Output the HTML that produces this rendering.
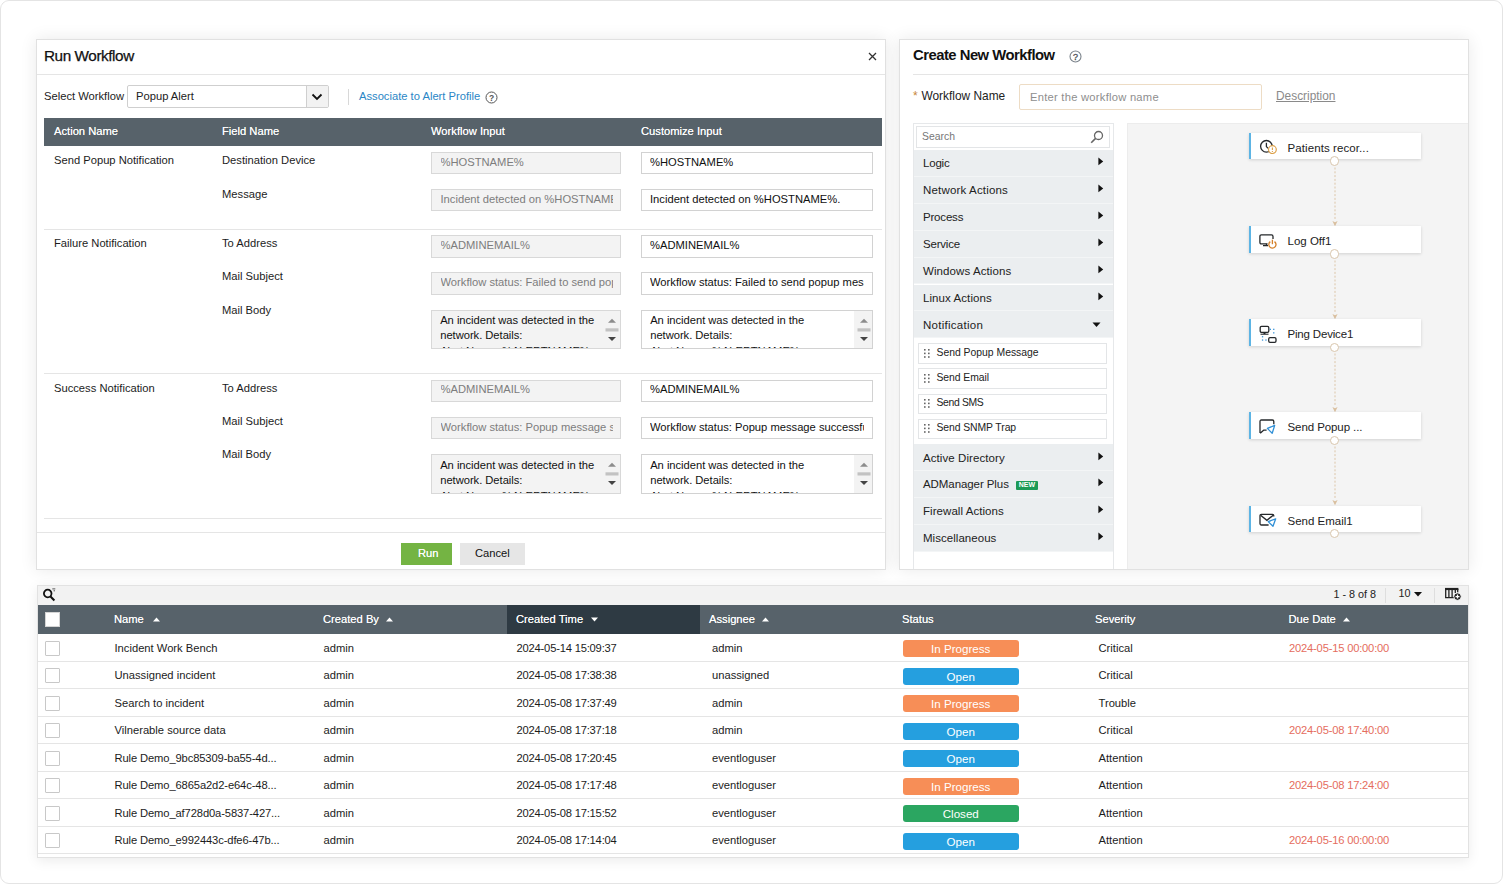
<!DOCTYPE html>
<html lang="en">
<head>
<meta charset="utf-8">
<title>Workflow</title>
<style>
*{box-sizing:border-box;margin:0;padding:0}
html,body{width:1503px;height:884px;overflow:hidden;background:#fff}
body{position:relative;font-family:"Liberation Sans",sans-serif;font-size:11.2px;color:#1c1c1c}
.t{position:absolute;white-space:nowrap;line-height:16px}
.b{position:absolute}
.frame{border:1px solid #e4e4e4;border-radius:9px;background:#fff}
.panel{background:#fff;border:1px solid #e1e1e1;box-shadow:0 0 16px rgba(0,0,0,.09)}
.hl{background:#e5e5e5}
.w{color:#fff;text-shadow:0 0 .4px rgba(255,255,255,.8)}
.in{border:1px solid #d2d2d2;background:#fff}
.in.d{background:#f3f3f3;border-color:#d8d8d8}
.clip{overflow:hidden}
.sb{background:#f3f3f3}
.mi{background:#ebeef0;border-bottom:1px solid #f3f5f6}
.si{border:1px solid #e3e5e7;background:#fff}
.node{background:#fff;border-left:2px solid #5db4e4;box-shadow:0 1px 3px rgba(0,0,0,.15)}
.port{border-radius:50%;background:#fff;border:1px solid #d9c6ad}
.bd{border-radius:3px;color:#fff;text-align:center;line-height:17px;font-size:11.6px}
.ip{background:#f78e57}.op{background:#259fdf}.cl{background:#2ba661}
.cb{border:1px solid #c8c8c8;border-radius:1px;background:#fff}
svg{position:absolute;overflow:visible}
</style>
</head>
<body>
<div class="b frame" style="left:0px;top:0px;width:1503.00px;height:884.00px;"></div>
<!-- Run Workflow -->
<div class="b panel" style="left:36px;top:39px;width:850.00px;height:531.00px;"></div>
<div class="t " style="left:44px;top:48.00px;font-size:15.3px;color:#111;letter-spacing:-0.429px;-webkit-text-stroke:.25px #111;">Run Workflow</div>
<svg style="left:868px;top:52px" width="9" height="9" viewBox="0 0 9 9"><path d="M1 1 L8 8 M8 1 L1 8" stroke="#333" stroke-width="1.3" fill="none"/></svg>
<div class="b hl" style="left:37px;top:74px;width:848.00px;height:1.00px;"></div>
<div class="t " style="left:44px;top:88.20px;font-size:11.2px;color:#222;">Select Workflow</div>
<div class="b " style="left:127px;top:85px;width:202.00px;height:23.00px;border:1px solid #cfcfcf;background:#fff;border-radius:2px"></div>
<div class="t " style="left:136px;top:88.20px;font-size:11.2px;color:#222;">Popup Alert</div>
<div class="b " style="left:306px;top:86px;width:22.00px;height:21.00px;border-left:1px solid #cfcfcf;background:#f2f2f2;border-radius:0 1px 1px 0"></div>
<svg style="left:311px;top:91.8px" width="12" height="10" viewBox="0 0 12 10"><path d="M1.5 2.5 L6 7 L10.5 2.5" fill="none" stroke="#111" stroke-width="1.8"/></svg>
<div class="b " style="left:348px;top:89px;width:1.00px;height:16.00px;background:#d8d8d8"></div>
<div class="t " style="left:359px;top:88.20px;font-size:11.2px;color:#2a86c6;">Associate to Alert Profile</div>
<svg style="left:485px;top:91px" width="13" height="13" viewBox="0 0 13 13"><circle cx="6.5" cy="6.5" r="5.5" fill="none" stroke="#555" stroke-width="1"/><text x="6.5" y="9.6" font-size="8.5" font-family="Liberation Sans, sans-serif" font-weight="bold" text-anchor="middle" fill="#555">?</text></svg>
<div class="b " style="left:44px;top:117.5px;width:838.00px;height:28.50px;background:#57626a"></div>
<div class="t w" style="left:54px;top:122.50px;font-size:11.2px;">Action Name</div>
<div class="t w" style="left:222px;top:122.50px;font-size:11.2px;">Field Name</div>
<div class="t w" style="left:431px;top:122.50px;font-size:11.2px;">Workflow Input</div>
<div class="t w" style="left:641px;top:122.50px;font-size:11.2px;">Customize Input</div>
<div class="t " style="left:54px;top:152.30px;font-size:11.2px;">Send Popup Notification</div>
<div class="t " style="left:222px;top:152.30px;font-size:11.2px;">Destination Device</div>
<div class="b in d" style="left:431px;top:152px;width:190.00px;height:22.00px;"></div>
<div class="b in" style="left:641px;top:152px;width:232.00px;height:22.00px;"></div>
<div class="b clip" style="left:440.5px;top:153px;width:172px;height:20px">
<div class="t " style="left:0px;top:1.00px;font-size:11.2px;color:#7d7d7d;">%HOSTNAME%</div>
</div>
<div class="b clip" style="left:650px;top:153px;width:214px;height:20px">
<div class="t " style="left:0px;top:1.00px;font-size:11.2px;color:#111;">%HOSTNAME%</div>
</div>
<div class="t " style="left:222px;top:185.60px;font-size:11.2px;">Message</div>
<div class="b in d" style="left:431px;top:189px;width:190.00px;height:22.00px;"></div>
<div class="b in" style="left:641px;top:189px;width:232.00px;height:22.00px;"></div>
<div class="b clip" style="left:440.5px;top:190px;width:172px;height:20px">
<div class="t " style="left:0px;top:1.00px;font-size:11.2px;color:#7d7d7d;">Incident detected on %HOSTNAME%.</div>
</div>
<div class="b clip" style="left:650px;top:190px;width:214px;height:20px">
<div class="t " style="left:0px;top:1.00px;font-size:11.2px;color:#111;">Incident detected on %HOSTNAME%.</div>
</div>
<div class="b hl" style="left:44px;top:229px;width:838.00px;height:1.00px;"></div>
<div class="t " style="left:54px;top:235.20px;font-size:11.2px;">Failure Notification</div>
<div class="t " style="left:222px;top:235.20px;font-size:11.2px;">To Address</div>
<div class="b in d" style="left:431px;top:235px;width:190.00px;height:23.00px;"></div>
<div class="b in" style="left:641px;top:235px;width:232.00px;height:23.00px;"></div>
<div class="b clip" style="left:440.5px;top:236px;width:172px;height:21px">
<div class="t " style="left:0px;top:1.20px;font-size:11.2px;color:#7d7d7d;">%ADMINEMAIL%</div>
</div>
<div class="b clip" style="left:650px;top:236px;width:214px;height:21px">
<div class="t " style="left:0px;top:1.20px;font-size:11.2px;color:#111;">%ADMINEMAIL%</div>
</div>
<div class="t " style="left:222px;top:268.40px;font-size:11.2px;">Mail Subject</div>
<div class="b in d" style="left:431px;top:272px;width:190.00px;height:23.00px;"></div>
<div class="b in" style="left:641px;top:272px;width:232.00px;height:23.00px;"></div>
<div class="b clip" style="left:440.5px;top:273px;width:172px;height:21px">
<div class="t " style="left:0px;top:0.90px;font-size:11.2px;color:#7d7d7d;">Workflow status: Failed to send popup message</div>
</div>
<div class="b clip" style="left:650px;top:273px;width:214px;height:21px">
<div class="t " style="left:0px;top:0.90px;font-size:11.2px;color:#111;">Workflow status: Failed to send popup message</div>
</div>
<div class="t " style="left:222px;top:302.10px;font-size:11.2px;">Mail Body</div>
<div class="b in d" style="left:431px;top:310px;width:190.00px;height:39.00px;"></div>
<div class="b clip" style="left:432px;top:311px;width:188px;height:37px">
<div class="t " style="left:8.2px;top:0.90px;font-size:11.2px;color:#111;letter-spacing:-.03px;">An incident was detected in the</div>
<div class="t " style="left:8.2px;top:16.20px;font-size:11.2px;color:#111;letter-spacing:-.03px;">network. Details:</div>
<div class="t " style="left:8.2px;top:31.50px;font-size:11.2px;color:#111;letter-spacing:-.03px;">Alert Name: %ALERTNAME%</div>
<div class="b sb" style="left:170px;top:0;width:18px;height:37px"></div>
<svg style="left:175px;top:6.5px" width="10" height="24" viewBox="0 0 10 24"><path d="M1 4.7 L5 0.7 L9 4.7 Z" fill="#8c8c8c"/><rect x="-1.5" y="10.3" width="13" height="3.2" fill="#c2c2c2"/><path d="M1 19 L5 23 L9 19 Z" fill="#444"/></svg>
</div>
<div class="b in" style="left:641px;top:310px;width:232.00px;height:39.00px;"></div>
<div class="b clip" style="left:642px;top:311px;width:230px;height:37px">
<div class="t " style="left:8.2px;top:0.90px;font-size:11.2px;color:#111;letter-spacing:-.03px;">An incident was detected in the</div>
<div class="t " style="left:8.2px;top:16.20px;font-size:11.2px;color:#111;letter-spacing:-.03px;">network. Details:</div>
<div class="t " style="left:8.2px;top:31.50px;font-size:11.2px;color:#111;letter-spacing:-.03px;">Alert Name: %ALERTNAME%</div>
<div class="b sb" style="left:212px;top:0;width:18px;height:37px"></div>
<svg style="left:217px;top:6.5px" width="10" height="24" viewBox="0 0 10 24"><path d="M1 4.7 L5 0.7 L9 4.7 Z" fill="#8c8c8c"/><rect x="-1.5" y="10.3" width="13" height="3.2" fill="#c2c2c2"/><path d="M1 19 L5 23 L9 19 Z" fill="#444"/></svg>
</div>
<div class="b hl" style="left:44px;top:373px;width:838.00px;height:1.00px;"></div>
<div class="t " style="left:54px;top:379.50px;font-size:11.2px;">Success Notification</div>
<div class="t " style="left:222px;top:379.50px;font-size:11.2px;">To Address</div>
<div class="b in d" style="left:431px;top:380px;width:190.00px;height:22.00px;"></div>
<div class="b in" style="left:641px;top:380px;width:232.00px;height:22.00px;"></div>
<div class="b clip" style="left:440.5px;top:381px;width:172px;height:20px">
<div class="t " style="left:0px;top:0.20px;font-size:11.2px;color:#7d7d7d;">%ADMINEMAIL%</div>
</div>
<div class="b clip" style="left:650px;top:381px;width:214px;height:20px">
<div class="t " style="left:0px;top:0.20px;font-size:11.2px;color:#111;">%ADMINEMAIL%</div>
</div>
<div class="t " style="left:222px;top:412.80px;font-size:11.2px;">Mail Subject</div>
<div class="b in d" style="left:431px;top:417px;width:190.00px;height:22.00px;"></div>
<div class="b in" style="left:641px;top:417px;width:232.00px;height:22.00px;"></div>
<div class="b clip" style="left:440.5px;top:418px;width:172px;height:20px">
<div class="t " style="left:0px;top:0.60px;font-size:11.2px;color:#7d7d7d;">Workflow status: Popup message successfully sent</div>
</div>
<div class="b clip" style="left:650px;top:418px;width:214px;height:20px">
<div class="t " style="left:0px;top:0.60px;font-size:11.2px;color:#111;">Workflow status: Popup message successfully sent</div>
</div>
<div class="t " style="left:222px;top:445.70px;font-size:11.2px;">Mail Body</div>
<div class="b in d" style="left:431px;top:454px;width:190.00px;height:40.00px;"></div>
<div class="b clip" style="left:432px;top:455px;width:188px;height:38px">
<div class="t " style="left:8.2px;top:1.90px;font-size:11.2px;color:#111;letter-spacing:-.03px;">An incident was detected in the</div>
<div class="t " style="left:8.2px;top:17.20px;font-size:11.2px;color:#111;letter-spacing:-.03px;">network. Details:</div>
<div class="t " style="left:8.2px;top:32.50px;font-size:11.2px;color:#111;letter-spacing:-.03px;">Alert Name: %ALERTNAME%</div>
<div class="b sb" style="left:170px;top:0;width:18px;height:38px"></div>
<svg style="left:175px;top:7.0px" width="10" height="24" viewBox="0 0 10 24"><path d="M1 4.7 L5 0.7 L9 4.7 Z" fill="#8c8c8c"/><rect x="-1.5" y="10.3" width="13" height="3.2" fill="#c2c2c2"/><path d="M1 19 L5 23 L9 19 Z" fill="#444"/></svg>
</div>
<div class="b in" style="left:641px;top:454px;width:232.00px;height:40.00px;"></div>
<div class="b clip" style="left:642px;top:455px;width:230px;height:38px">
<div class="t " style="left:8.2px;top:1.90px;font-size:11.2px;color:#111;letter-spacing:-.03px;">An incident was detected in the</div>
<div class="t " style="left:8.2px;top:17.20px;font-size:11.2px;color:#111;letter-spacing:-.03px;">network. Details:</div>
<div class="t " style="left:8.2px;top:32.50px;font-size:11.2px;color:#111;letter-spacing:-.03px;">Alert Name: %ALERTNAME%</div>
<div class="b sb" style="left:212px;top:0;width:18px;height:38px"></div>
<svg style="left:217px;top:7.0px" width="10" height="24" viewBox="0 0 10 24"><path d="M1 4.7 L5 0.7 L9 4.7 Z" fill="#8c8c8c"/><rect x="-1.5" y="10.3" width="13" height="3.2" fill="#c2c2c2"/><path d="M1 19 L5 23 L9 19 Z" fill="#444"/></svg>
</div>
<div class="b hl" style="left:44px;top:518px;width:838.00px;height:1.00px;"></div>
<div class="b hl" style="left:37px;top:531.5px;width:848.00px;height:1.00px;"></div>
<div class="b " style="left:401px;top:543px;width:51.00px;height:22.00px;background:#74b443"></div>
<div class="t w" style="left:418px;top:545.20px;font-size:11.2px;color:#fff;">Run</div>
<div class="b " style="left:460px;top:543px;width:65.00px;height:22.00px;background:#e6e6e6"></div>
<div class="t " style="left:475px;top:545.20px;font-size:11.2px;color:#111;">Cancel</div>
<!-- Create New Workflow -->
<div class="b panel" style="left:899px;top:39px;width:570.00px;height:531.00px;"></div>
<div class="t " style="left:913px;top:47.20px;font-size:14.8px;color:#111;font-weight:bold;letter-spacing:-0.497px;">Create New Workflow</div>
<svg style="left:1069px;top:50px" width="13" height="13" viewBox="0 0 13 13"><circle cx="6.5" cy="6.5" r="5.5" fill="none" stroke="#7b838b" stroke-width="1.1"/><text x="6.5" y="9.7" font-size="9" font-family="Liberation Sans, sans-serif" text-anchor="middle" fill="#4a4f55" stroke="#4a4f55" stroke-width=".3">?</text></svg>
<div class="b hl" style="left:913px;top:74px;width:555.00px;height:1.00px;"></div>
<div class="t " style="left:913px;top:88.20px;font-size:12px;color:#c8873a;">*</div>
<div class="t " style="left:921.5px;top:87.70px;font-size:11.9px;color:#222;">Workflow Name</div>
<div class="b " style="left:1019px;top:84px;width:242.50px;height:25.50px;border:1px solid #eddcc5;background:#fff;border-radius:2px"></div>
<div class="t " style="left:1030px;top:88.70px;font-size:11.2px;color:#8e8e8e;letter-spacing:.25px;">Enter the workflow name</div>
<div class="t " style="left:1276px;top:88.20px;font-size:11.9px;color:#8a8a8a;text-decoration:underline;">Description</div>
<div class="b " style="left:913px;top:123px;width:200.50px;height:446.00px;border:1px solid #e6e8ea;border-bottom:0;background:#fff"></div>
<div class="b " style="left:916px;top:126px;width:194.00px;height:21.50px;border:1px solid #e3e5e7;background:#fff"></div>
<div class="t " style="left:922px;top:129.20px;font-size:10.4px;color:#777;">Search</div>
<svg style="left:1090px;top:130px" width="14" height="14" viewBox="0 0 14 14"><circle cx="8.5" cy="5.5" r="4" fill="none" stroke="#666" stroke-width="1.3"/><path d="M5.6 8.4 L1.2 12.8" stroke="#666" stroke-width="1.6" fill="none"/></svg>
<div class="b mi" style="left:914px;top:150.0px;width:198.50px;height:26.90px;"></div>
<div class="t " style="left:923px;top:155.20px;font-size:11.5px;color:#222;letter-spacing:-0.198px;">Logic</div>
<svg style="left:1098px;top:157.2px" width="6" height="9" viewBox="0 0 6 9"><path d="M0.4 0.6 L5.2 4.4 L0.4 8.2 Z" fill="#111"/></svg>
<div class="b mi" style="left:914px;top:176.9px;width:198.50px;height:26.90px;"></div>
<div class="t " style="left:923px;top:182.10px;font-size:11.5px;color:#222;letter-spacing:0.170px;">Network Actions</div>
<svg style="left:1098px;top:184.1px" width="6" height="9" viewBox="0 0 6 9"><path d="M0.4 0.6 L5.2 4.4 L0.4 8.2 Z" fill="#111"/></svg>
<div class="b mi" style="left:914px;top:203.8px;width:198.50px;height:26.90px;"></div>
<div class="t " style="left:923px;top:209.00px;font-size:11.5px;color:#222;letter-spacing:-0.192px;">Process</div>
<svg style="left:1098px;top:211.0px" width="6" height="9" viewBox="0 0 6 9"><path d="M0.4 0.6 L5.2 4.4 L0.4 8.2 Z" fill="#111"/></svg>
<div class="b mi" style="left:914px;top:230.70000000000002px;width:198.50px;height:26.90px;"></div>
<div class="t " style="left:923px;top:235.90px;font-size:11.5px;color:#222;letter-spacing:-0.207px;">Service</div>
<svg style="left:1098px;top:237.9px" width="6" height="9" viewBox="0 0 6 9"><path d="M0.4 0.6 L5.2 4.4 L0.4 8.2 Z" fill="#111"/></svg>
<div class="b mi" style="left:914px;top:257.6px;width:198.50px;height:26.90px;"></div>
<div class="t " style="left:923px;top:262.80px;font-size:11.5px;color:#222;letter-spacing:0.092px;">Windows Actions</div>
<svg style="left:1098px;top:264.8px" width="6" height="9" viewBox="0 0 6 9"><path d="M0.4 0.6 L5.2 4.4 L0.4 8.2 Z" fill="#111"/></svg>
<div class="b mi" style="left:914px;top:284.5px;width:198.50px;height:26.90px;"></div>
<div class="t " style="left:923px;top:289.70px;font-size:11.5px;color:#222;letter-spacing:0.080px;">Linux Actions</div>
<svg style="left:1098px;top:291.7px" width="6" height="9" viewBox="0 0 6 9"><path d="M0.4 0.6 L5.2 4.4 L0.4 8.2 Z" fill="#111"/></svg>
<div class="b mi" style="left:914px;top:311.4px;width:198.50px;height:26.90px;"></div>
<div class="t " style="left:923px;top:316.60px;font-size:11.5px;color:#222;letter-spacing:0.268px;">Notification</div>
<svg style="left:1092px;top:322.4px" width="9" height="6" viewBox="0 0 9 6"><path d="M0.5 0.5 L8.5 0.5 L4.5 5 Z" fill="#111"/></svg>
<div class="b si" style="left:918px;top:343.3px;width:189.00px;height:20.60px;"></div>
<svg style="left:924px;top:348.8px" width="7" height="10" viewBox="0 0 7 10"><g fill="#666"><rect x="0" y="0" width="1.6" height="1.6"/><rect x="4" y="0" width="1.6" height="1.6"/><rect x="0" y="3.6" width="1.6" height="1.6"/><rect x="4" y="3.6" width="1.6" height="1.6"/><rect x="0" y="7.2" width="1.6" height="1.6"/><rect x="4" y="7.2" width="1.6" height="1.6"/></g></svg>
<div class="t " style="left:936.5px;top:344.80px;font-size:10.4px;color:#222;letter-spacing:-0.008px;">Send Popup Message</div>
<div class="b si" style="left:918px;top:368.45px;width:189.00px;height:20.60px;"></div>
<svg style="left:924px;top:373.9px" width="7" height="10" viewBox="0 0 7 10"><g fill="#666"><rect x="0" y="0" width="1.6" height="1.6"/><rect x="4" y="0" width="1.6" height="1.6"/><rect x="0" y="3.6" width="1.6" height="1.6"/><rect x="4" y="3.6" width="1.6" height="1.6"/><rect x="0" y="7.2" width="1.6" height="1.6"/><rect x="4" y="7.2" width="1.6" height="1.6"/></g></svg>
<div class="t " style="left:936.5px;top:369.95px;font-size:10.4px;color:#222;letter-spacing:-0.068px;">Send Email</div>
<div class="b si" style="left:918px;top:393.59999999999997px;width:189.00px;height:20.60px;"></div>
<svg style="left:924px;top:399.1px" width="7" height="10" viewBox="0 0 7 10"><g fill="#666"><rect x="0" y="0" width="1.6" height="1.6"/><rect x="4" y="0" width="1.6" height="1.6"/><rect x="0" y="3.6" width="1.6" height="1.6"/><rect x="4" y="3.6" width="1.6" height="1.6"/><rect x="0" y="7.2" width="1.6" height="1.6"/><rect x="4" y="7.2" width="1.6" height="1.6"/></g></svg>
<div class="t " style="left:936.5px;top:395.10px;font-size:10.4px;color:#222;letter-spacing:-0.339px;">Send SMS</div>
<div class="b si" style="left:918px;top:418.74999999999994px;width:189.00px;height:20.60px;"></div>
<svg style="left:924px;top:424.2px" width="7" height="10" viewBox="0 0 7 10"><g fill="#666"><rect x="0" y="0" width="1.6" height="1.6"/><rect x="4" y="0" width="1.6" height="1.6"/><rect x="0" y="3.6" width="1.6" height="1.6"/><rect x="4" y="3.6" width="1.6" height="1.6"/><rect x="0" y="7.2" width="1.6" height="1.6"/><rect x="4" y="7.2" width="1.6" height="1.6"/></g></svg>
<div class="t " style="left:936.5px;top:420.25px;font-size:10.4px;color:#222;letter-spacing:-0.081px;">Send SNMP Trap</div>
<div class="b mi" style="left:914px;top:444.3px;width:198.50px;height:26.90px;"></div>
<div class="t " style="left:923px;top:449.50px;font-size:11.5px;color:#222;letter-spacing:0.074px;">Active Directory</div>
<svg style="left:1098px;top:451.5px" width="6" height="9" viewBox="0 0 6 9"><path d="M0.4 0.6 L5.2 4.4 L0.4 8.2 Z" fill="#111"/></svg>
<div class="b mi" style="left:914px;top:471.2px;width:198.50px;height:26.90px;"></div>
<div class="t " style="left:923px;top:476.40px;font-size:11.5px;color:#222;letter-spacing:-0.081px;">ADManager Plus</div>
<svg style="left:1098px;top:478.4px" width="6" height="9" viewBox="0 0 6 9"><path d="M0.4 0.6 L5.2 4.4 L0.4 8.2 Z" fill="#111"/></svg>
<div class="b" style="left:1016px;top:481.2px;width:22px;height:9px;background:#1d9a57;color:#fff;font-size:7px;font-weight:bold;line-height:8.5px;text-align:center;letter-spacing:.1px;border-radius:1px">NEW</div>
<div class="b mi" style="left:914px;top:498.09999999999997px;width:198.50px;height:26.90px;"></div>
<div class="t " style="left:923px;top:503.30px;font-size:11.5px;color:#222;letter-spacing:0.057px;">Firewall Actions</div>
<svg style="left:1098px;top:505.3px" width="6" height="9" viewBox="0 0 6 9"><path d="M0.4 0.6 L5.2 4.4 L0.4 8.2 Z" fill="#111"/></svg>
<div class="b mi" style="left:914px;top:525.0px;width:198.50px;height:26.90px;"></div>
<div class="t " style="left:923px;top:530.20px;font-size:11.5px;color:#222;letter-spacing:0.041px;">Miscellaneous</div>
<svg style="left:1098px;top:532.2px" width="6" height="9" viewBox="0 0 6 9"><path d="M0.4 0.6 L5.2 4.4 L0.4 8.2 Z" fill="#111"/></svg>
<div class="b " style="left:1127px;top:123px;width:341.00px;height:446.00px;background:#f4f4f4;border-top:1px solid #ececec;border-left:1px solid #ececec"></div>
<div class="b node" style="left:1248.5px;top:132.8px;width:172.00px;height:26.70px;"></div>
<svg style="left:1259px;top:139.0px" width="18" height="19" viewBox="0 0 18 19"><circle cx="7.4" cy="7.3" r="5.8" fill="none" stroke="#25282b" stroke-width="1.3"/><path d="M7.4 3.8 V7.6 L9 9.2" fill="none" stroke="#25282b" stroke-width="1.3"/><circle cx="13.4" cy="10.6" r="3.9" fill="#fff" stroke="#dca048" stroke-width="1.2"/><path d="M13.4 8.4 V11 M13.4 12 V12.9" stroke="#dca048" stroke-width="1.1"/></svg>
<div class="t " style="left:1287.5px;top:139.80px;font-size:11.5px;color:#222;letter-spacing:0.09px;">Patients recor...</div>
<svg style="left:1330px;top:166.8px" width="10" height="60" viewBox="0 0 10 60"><path d="M5 0.5 V52" stroke="#dcc5a8" stroke-width="1" stroke-dasharray="2 1.8" fill="none"/><path d="M2.4 54 L5 55.2 L7.6 54 L5 59.2 Z" fill="#d9bf9f"/></svg>
<div class="b port" style="left:1329.7px;top:156.20000000000002px;width:9.40px;height:9.40px;"></div>
<div class="b node" style="left:1248.5px;top:226.0px;width:172.00px;height:26.70px;"></div>
<svg style="left:1259px;top:234.0px" width="18" height="19" viewBox="0 0 18 19"><path d="M8.5 9.8 H2.4 Q0.9 9.8 0.9 8.3 V2.4 Q0.9 0.9 2.4 0.9 H12.5 Q14 0.9 14 2.4 V5" fill="none" stroke="#25282b" stroke-width="1.3"/><path d="M7.5 9.8 V11.5 M4 11.6 H9" stroke="#25282b" stroke-width="1.3" fill="none"/><path d="M11.3 7.6 A3.6 3.6 0 1 0 15.5 7.6" fill="none" stroke="#d5812a" stroke-width="1.3"/><path d="M13.4 5.7 V10.2" stroke="#d5812a" stroke-width="1.3"/></svg>
<div class="t " style="left:1287.5px;top:233.00px;font-size:11.5px;color:#222;letter-spacing:0px;">Log Off1</div>
<svg style="left:1330px;top:260.0px" width="10" height="60" viewBox="0 0 10 60"><path d="M5 0.5 V52" stroke="#dcc5a8" stroke-width="1" stroke-dasharray="2 1.8" fill="none"/><path d="M2.4 54 L5 55.2 L7.6 54 L5 59.2 Z" fill="#d9bf9f"/></svg>
<div class="b port" style="left:1329.7px;top:249.4px;width:9.40px;height:9.40px;"></div>
<div class="b node" style="left:1248.5px;top:319.2px;width:172.00px;height:26.70px;"></div>
<svg style="left:1259px;top:325.0px" width="18" height="19" viewBox="0 0 18 19"><rect x="1.2" y="1.4" width="8.6" height="6" rx="1.3" fill="none" stroke="#25282b" stroke-width="1.3"/><path d="M1.5 9.2 H9.5" stroke="#25282b" stroke-width="1.1"/><path d="M4.5 7.5 H6.5 V9 H4.5 Z" fill="#25282b"/><rect x="9.7" y="12.7" width="7.3" height="4.6" rx="1.3" fill="none" stroke="#25282b" stroke-width="1.3"/><g fill="#3a94d8"><rect x="10.7" y="3.7" width="1.3" height="1.3"/><rect x="14.1" y="3.7" width="1.3" height="1.3"/><rect x="14.1" y="7.2" width="1.3" height="1.3"/><rect x="2.9" y="11.1" width="1.3" height="1.3"/><rect x="2.9" y="14.4" width="1.3" height="1.3"/><rect x="6.3" y="14.4" width="1.3" height="1.3"/></g></svg>
<div class="t " style="left:1287.5px;top:326.20px;font-size:11.5px;color:#222;letter-spacing:-0.18px;">Ping Device1</div>
<svg style="left:1330px;top:353.2px" width="10" height="60" viewBox="0 0 10 60"><path d="M5 0.5 V52" stroke="#dcc5a8" stroke-width="1" stroke-dasharray="2 1.8" fill="none"/><path d="M2.4 54 L5 55.2 L7.6 54 L5 59.2 Z" fill="#d9bf9f"/></svg>
<div class="b port" style="left:1329.7px;top:342.59999999999997px;width:9.40px;height:9.40px;"></div>
<div class="b node" style="left:1248.5px;top:412.4px;width:172.00px;height:26.70px;"></div>
<svg style="left:1259px;top:419.0px" width="18" height="19" viewBox="0 0 18 19"><path d="M1 14 V2.4 Q1 1 2.4 1 H13.4 Q14.8 1 14.8 2.4 V5.2 M7.6 11.2 H4.6 L1.2 14.2" fill="none" stroke="#25282b" stroke-width="1.3" stroke-linejoin="round"/><path d="M8.4 9.4 L15.7 6.4 L13.2 14.3 Z" fill="none" stroke="#2f8fd6" stroke-width="1.3" stroke-linejoin="round"/></svg>
<div class="t " style="left:1287.5px;top:419.40px;font-size:11.5px;color:#222;letter-spacing:-0.08px;">Send Popup ...</div>
<svg style="left:1330px;top:446.4px" width="10" height="60" viewBox="0 0 10 60"><path d="M5 0.5 V52" stroke="#dcc5a8" stroke-width="1" stroke-dasharray="2 1.8" fill="none"/><path d="M2.4 54 L5 55.2 L7.6 54 L5 59.2 Z" fill="#d9bf9f"/></svg>
<div class="b port" style="left:1329.7px;top:435.79999999999995px;width:9.40px;height:9.40px;"></div>
<div class="b node" style="left:1248.5px;top:505.59999999999997px;width:172.00px;height:26.70px;"></div>
<svg style="left:1259px;top:513.0px" width="18" height="19" viewBox="0 0 18 19"><path d="M9.6 12 H2.4 Q1 12 1 10.6 V2.7 Q1 1.3 2.4 1.3 H13.4 Q14.8 1.3 14.8 2.7 V3.6" fill="none" stroke="#25282b" stroke-width="1.3"/><path d="M1.6 2.2 L7.9 7.3 L14.2 2.2" fill="none" stroke="#25282b" stroke-width="1.3"/><path d="M9.2 8.6 L16.7 5.8 L14 13.3 Z" fill="none" stroke="#2f8fd6" stroke-width="1.3" stroke-linejoin="round"/></svg>
<div class="t " style="left:1287.5px;top:512.60px;font-size:11.5px;color:#222;letter-spacing:0px;">Send Email1</div>
<div class="b port" style="left:1329.7px;top:529.0px;width:9.40px;height:9.40px;"></div>
<!-- Incident table -->
<div class="b " style="left:37px;top:585px;width:1431.50px;height:272.50px;border:1px solid #e2e2e2;background:#fff;box-shadow:0 3px 12px rgba(0,0,0,.08)"></div>
<div class="b " style="left:38px;top:586px;width:1429.50px;height:19.50px;background:#f2f2f2"></div>
<svg style="left:43px;top:587.5px" width="14" height="14" viewBox="0 0 14 14"><circle cx="4.7" cy="5.5" r="3.8" fill="none" stroke="#111" stroke-width="1.8"/><path d="M7.5 8.6 L11.4 12.4" stroke="#111" stroke-width="2.1" fill="none"/><path d="M9.3 0.9 H12.3 M10.5 2.8 H12" stroke="#444" stroke-width=".9"/></svg>
<div class="t " style="left:1333.5px;top:586.20px;font-size:10.8px;color:#222;">1 - 8 of 8</div>
<div class="b " style="left:1385px;top:588px;width:1.00px;height:15.00px;background:#dedede"></div>
<div class="t " style="left:1398.5px;top:585.20px;font-size:10.8px;color:#222;">10</div>
<svg style="left:1413.5px;top:591.5px" width="8" height="5" viewBox="0 0 8 5"><path d="M0 0 H8 L4 4.5 Z" fill="#111"/></svg>
<div class="b " style="left:1433.5px;top:588px;width:1.00px;height:15.00px;background:#dedede"></div>
<svg style="left:1445px;top:588px" width="17" height="13" viewBox="0 0 17 13"><path d="M0.7 0.5 V9.6 H9 M3.9 1 V9.6 M7.1 1 V9.6 M10.3 1 V5 M12.7 1 V4.5" fill="none" stroke="#222" stroke-width="1.3"/><path d="M0 1 H13.4" stroke="#222" stroke-width="2.2"/><circle cx="12.5" cy="8.6" r="3.7" fill="#222" stroke="#fff" stroke-width=".8"/><path d="M12.5 6.6 V10.6 M10.5 8.6 H14.5" stroke="#fff" stroke-width="1.3"/></svg>
<div class="b " style="left:38px;top:605.3px;width:1429.50px;height:28.70px;background:#57626a"></div>
<div class="b " style="left:507px;top:605.3px;width:193.00px;height:28.70px;background:#2e3a43"></div>
<div class="b " style="left:45px;top:612px;width:15.00px;height:15.00px;background:#fff;border:1px solid #d5d5d5"></div>
<div class="t w" style="left:114px;top:611.30px;font-size:11.2px;">Name</div>
<svg style="left:152.5px;top:616.5px" width="7" height="5" viewBox="0 0 7 5"><path d="M0 4.5 L3.5 0.5 L7 4.5 Z" fill="#fff"/></svg>
<div class="t w" style="left:323px;top:611.30px;font-size:11.2px;">Created By</div>
<svg style="left:385.5px;top:616.5px" width="7" height="5" viewBox="0 0 7 5"><path d="M0 4.5 L3.5 0.5 L7 4.5 Z" fill="#fff"/></svg>
<div class="t w" style="left:516px;top:611.30px;font-size:11.2px;">Created Time</div>
<svg style="left:590.5px;top:617px" width="7" height="5" viewBox="0 0 7 5"><path d="M0 0.5 L3.5 4.5 L7 0.5 Z" fill="#fff"/></svg>
<div class="t w" style="left:709px;top:611.30px;font-size:11.2px;">Assignee</div>
<svg style="left:761.5px;top:616.5px" width="7" height="5" viewBox="0 0 7 5"><path d="M0 4.5 L3.5 0.5 L7 4.5 Z" fill="#fff"/></svg>
<div class="t w" style="left:902px;top:611.30px;font-size:11.2px;">Status</div>
<div class="t w" style="left:1095px;top:611.30px;font-size:11.2px;">Severity</div>
<div class="t w" style="left:1288.5px;top:611.30px;font-size:11.2px;">Due Date</div>
<svg style="left:1343.0px;top:616.5px" width="7" height="5" viewBox="0 0 7 5"><path d="M0 4.5 L3.5 0.5 L7 4.5 Z" fill="#fff"/></svg>
<div class="b hl" style="left:38px;top:661px;width:1429.50px;height:1.00px;"></div>
<div class="b cb" style="left:45px;top:641px;width:15.00px;height:15.00px;"></div>
<div class="t " style="left:114.5px;top:640.00px;font-size:11.2px;">Incident Work Bench</div>
<div class="t " style="left:323.5px;top:640.00px;font-size:11.2px;">admin</div>
<div class="t " style="left:516.5px;top:640.00px;font-size:11.2px;letter-spacing:-.2px;">2024-05-14 15:09:37</div>
<div class="t " style="left:712px;top:640.00px;font-size:11.2px;">admin</div>
<div class="b bd ip" style="left:903px;top:640px;width:115.50px;height:17.00px;">In Progress</div>
<div class="t " style="left:1098.5px;top:640.00px;font-size:11.2px;">Critical</div>
<div class="t " style="left:1289px;top:640.00px;font-size:11.2px;color:#e56d5e;letter-spacing:-.2px;">2024-05-15 00:00:00</div>
<div class="b hl" style="left:38px;top:688px;width:1429.50px;height:1.00px;"></div>
<div class="b cb" style="left:45px;top:668px;width:15.00px;height:15.00px;"></div>
<div class="t " style="left:114.5px;top:667.00px;font-size:11.2px;">Unassigned incident</div>
<div class="t " style="left:323.5px;top:667.00px;font-size:11.2px;">admin</div>
<div class="t " style="left:516.5px;top:667.00px;font-size:11.2px;letter-spacing:-.2px;">2024-05-08 17:38:38</div>
<div class="t " style="left:712px;top:667.00px;font-size:11.2px;">unassigned</div>
<div class="b bd op" style="left:903px;top:668px;width:115.50px;height:17.00px;">Open</div>
<div class="t " style="left:1098.5px;top:667.00px;font-size:11.2px;">Critical</div>
<div class="b hl" style="left:38px;top:716px;width:1429.50px;height:1.00px;"></div>
<div class="b cb" style="left:45px;top:696px;width:15.00px;height:15.00px;"></div>
<div class="t " style="left:114.5px;top:695.00px;font-size:11.2px;">Search to incident</div>
<div class="t " style="left:323.5px;top:695.00px;font-size:11.2px;">admin</div>
<div class="t " style="left:516.5px;top:695.00px;font-size:11.2px;letter-spacing:-.2px;">2024-05-08 17:37:49</div>
<div class="t " style="left:712px;top:695.00px;font-size:11.2px;">admin</div>
<div class="b bd ip" style="left:903px;top:695px;width:115.50px;height:17.00px;">In Progress</div>
<div class="t " style="left:1098.5px;top:695.00px;font-size:11.2px;">Trouble</div>
<div class="b hl" style="left:38px;top:743px;width:1429.50px;height:1.00px;"></div>
<div class="b cb" style="left:45px;top:723px;width:15.00px;height:15.00px;"></div>
<div class="t " style="left:114.5px;top:722.00px;font-size:11.2px;">Vilnerable source data</div>
<div class="t " style="left:323.5px;top:722.00px;font-size:11.2px;">admin</div>
<div class="t " style="left:516.5px;top:722.00px;font-size:11.2px;letter-spacing:-.2px;">2024-05-08 17:37:18</div>
<div class="t " style="left:712px;top:722.00px;font-size:11.2px;">admin</div>
<div class="b bd op" style="left:903px;top:723px;width:115.50px;height:17.00px;">Open</div>
<div class="t " style="left:1098.5px;top:722.00px;font-size:11.2px;">Critical</div>
<div class="t " style="left:1289px;top:722.00px;font-size:11.2px;color:#e56d5e;letter-spacing:-.2px;">2024-05-08 17:40:00</div>
<div class="b hl" style="left:38px;top:771px;width:1429.50px;height:1.00px;"></div>
<div class="b cb" style="left:45px;top:751px;width:15.00px;height:15.00px;"></div>
<div class="t " style="left:114.5px;top:750.00px;font-size:11.2px;letter-spacing:-.12px;">Rule Demo_9bc85309-ba55-4d...</div>
<div class="t " style="left:323.5px;top:750.00px;font-size:11.2px;">admin</div>
<div class="t " style="left:516.5px;top:750.00px;font-size:11.2px;letter-spacing:-.2px;">2024-05-08 17:20:45</div>
<div class="t " style="left:712px;top:750.00px;font-size:11.2px;">eventloguser</div>
<div class="b bd op" style="left:903px;top:750px;width:115.50px;height:17.00px;">Open</div>
<div class="t " style="left:1098.5px;top:750.00px;font-size:11.2px;">Attention</div>
<div class="b hl" style="left:38px;top:798px;width:1429.50px;height:1.00px;"></div>
<div class="b cb" style="left:45px;top:778px;width:15.00px;height:15.00px;"></div>
<div class="t " style="left:114.5px;top:777.00px;font-size:11.2px;letter-spacing:-.12px;">Rule Demo_6865a2d2-e64c-48...</div>
<div class="t " style="left:323.5px;top:777.00px;font-size:11.2px;">admin</div>
<div class="t " style="left:516.5px;top:777.00px;font-size:11.2px;letter-spacing:-.2px;">2024-05-08 17:17:48</div>
<div class="t " style="left:712px;top:777.00px;font-size:11.2px;">eventloguser</div>
<div class="b bd ip" style="left:903px;top:778px;width:115.50px;height:17.00px;">In Progress</div>
<div class="t " style="left:1098.5px;top:777.00px;font-size:11.2px;">Attention</div>
<div class="t " style="left:1289px;top:777.00px;font-size:11.2px;color:#e56d5e;letter-spacing:-.2px;">2024-05-08 17:24:00</div>
<div class="b hl" style="left:38px;top:826px;width:1429.50px;height:1.00px;"></div>
<div class="b cb" style="left:45px;top:806px;width:15.00px;height:15.00px;"></div>
<div class="t " style="left:114.5px;top:805.00px;font-size:11.2px;letter-spacing:-.12px;">Rule Demo_af728d0a-5837-427...</div>
<div class="t " style="left:323.5px;top:805.00px;font-size:11.2px;">admin</div>
<div class="t " style="left:516.5px;top:805.00px;font-size:11.2px;letter-spacing:-.2px;">2024-05-08 17:15:52</div>
<div class="t " style="left:712px;top:805.00px;font-size:11.2px;">eventloguser</div>
<div class="b bd cl" style="left:903px;top:805px;width:115.50px;height:17.00px;">Closed</div>
<div class="t " style="left:1098.5px;top:805.00px;font-size:11.2px;">Attention</div>
<div class="b hl" style="left:38px;top:853px;width:1429.50px;height:1.00px;"></div>
<div class="b cb" style="left:45px;top:833px;width:15.00px;height:15.00px;"></div>
<div class="t " style="left:114.5px;top:832.00px;font-size:11.2px;letter-spacing:-.12px;">Rule Demo_e992443c-dfe6-47b...</div>
<div class="t " style="left:323.5px;top:832.00px;font-size:11.2px;">admin</div>
<div class="t " style="left:516.5px;top:832.00px;font-size:11.2px;letter-spacing:-.2px;">2024-05-08 17:14:04</div>
<div class="t " style="left:712px;top:832.00px;font-size:11.2px;">eventloguser</div>
<div class="b bd op" style="left:903px;top:833px;width:115.50px;height:17.00px;">Open</div>
<div class="t " style="left:1098.5px;top:832.00px;font-size:11.2px;">Attention</div>
<div class="t " style="left:1289px;top:832.00px;font-size:11.2px;color:#e56d5e;letter-spacing:-.2px;">2024-05-16 00:00:00</div>
</body>
</html>
